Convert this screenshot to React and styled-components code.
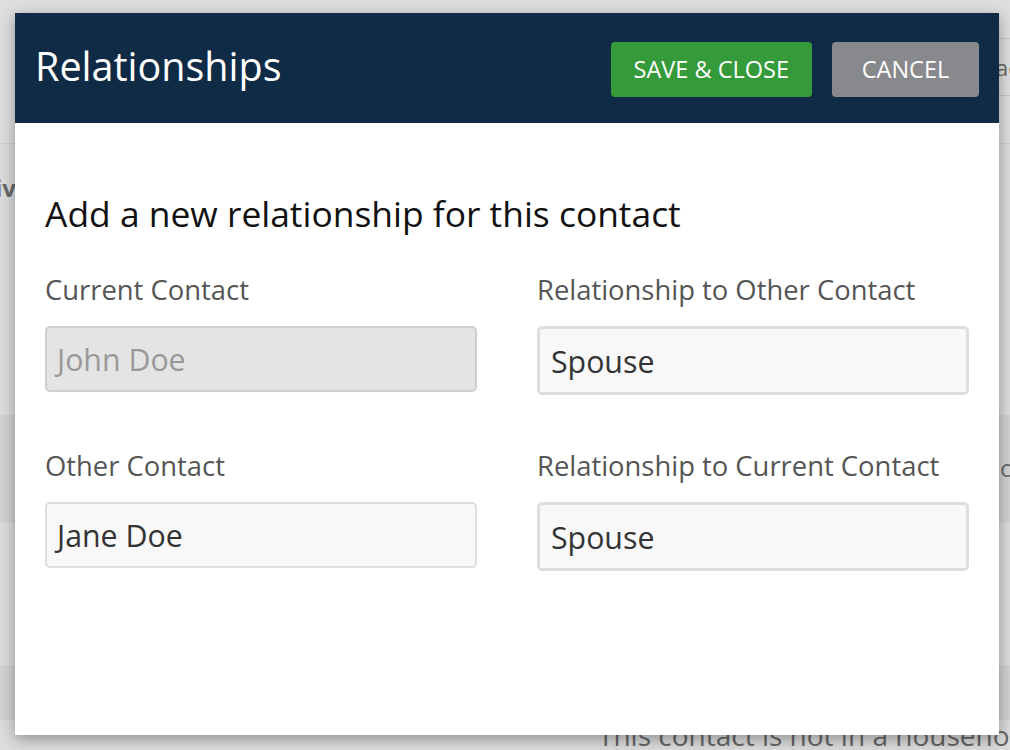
import React from "react";
import styled, { createGlobalStyle } from "styled-components";

//global styles
const GlobalStyle = createGlobalStyle`
    html, body {
        margin: 0;
        padding: 0;
        width: 1010px;
        height: 750px;
        overflow: hidden;
        font-family: "Open Sans", "Noto Sans", sans-serif;
    }
    * { box-sizing: border-box; }
`;

//background page (dimmed)
const Page = styled.div`
    position: relative;
    width: 1010px;
    height: 750px;
    background-color: #dcdcdc;
    display: flex;
    flex-direction: column;
    overflow: hidden;
    color: #6a6a6a;
`;

const PageTop = styled.div`
    height: 148px;
    background-color: #dedede;
    border-bottom: 1px solid #cfcfcf;
    display: flex;
    justify-content: flex-end;
    align-items: flex-start;
    padding-top: 38px;
`;

const SearchBox = styled.div`
    width: 14px;
    height: 58px;
    border-top: 1px solid #c8c8c8;
    border-bottom: 1px solid #c8c8c8;
    font-size: 22px;
    line-height: 56px;
    white-space: nowrap;
    overflow: hidden;
`;

const PageRow = styled.div`
    height: ${props => props.h}px;
    background-color: ${props => props.dark ? "#d2d2d2" : "transparent"};
    border-top: ${props => props.line ? "1px solid #cdcdcd" : "none"};
    display: flex;
    justify-content: space-between;
    align-items: center;
    font-size: 24px;
    font-weight: ${props => props.bold ? 700 : 400};
    white-space: nowrap;
`;

const Peek = styled.span`
    display: block;
    width: ${props => props.w}px;
    overflow: hidden;
    direction: ${props => props.rtl ? "rtl" : "ltr"};
`;

const BottomText = styled.div`
    padding-left: 598px;
    font-size: 28px;
    line-height: 30px;
    white-space: nowrap;
    color: #666;
`;

//modal
const Modal = styled.div`
    position: absolute;
    top: 13px;
    left: 15px;
    width: 984px;
    height: 722px;
    background-color: #ffffff;
    box-shadow: 0 4px 14px rgba(0, 0, 0, 0.35);
    display: flex;
    flex-direction: column;
`;

const ModalHeader = styled.div`
    height: 110px;
    background-color: #0f2b45;
    display: flex;
    align-items: center;
    justify-content: space-between;
    padding: 0 20px;
`;

const ModalTitle = styled.h1`
    margin: 0;
    color: #ffffff;
    font-size: 39.5px;
    font-weight: 400;
    line-height: 1;
    padding-bottom: 2px;
`;

const ButtonGroup = styled.div`
    display: flex;
    gap: 20px;
    margin-top: 2px;
`;

const Button = styled.button`
    height: 55px;
    min-width: 147px;
    padding: 0 23px;
    border: none;
    border-radius: 4px;
    background-color: ${props => props.variant === "save" ? "#359a3a" : "#88898c"};
    color: #ffffff;
    font-family: "Open Sans", sans-serif;
    font-size: 23.5px;
    text-transform: uppercase;
    letter-spacing: 0;
`;

const ModalBody = styled.div`
    padding: 69px 30px 0;
`;

const Heading = styled.h2`
    margin: 0 0 39px;
    font-size: 35.4px;
    font-weight: 400;
    line-height: 42px;
    color: #111111;
`;

const FormGrid = styled.div`
    display: grid;
    grid-template-columns: 432px 432px;
    column-gap: 60px;
    row-gap: 54px;
`;

const Field = styled.div`
    display: flex;
    flex-direction: column;
    gap: 19px;
`;

const Label = styled.label`
    font-size: 27.4px;
    line-height: 34px;
    color: #555555;
`;

const Input = styled.div`
    height: ${props => props.select ? 69 : 66}px;
    border: ${props => props.select ? "3px" : "2px"} solid ${props => props.disabled ? "#cfcfcf" : "#dedede"};
    border-radius: 5px;
    background-color: ${props => props.disabled ? "#e4e4e4" : "#f8f8f8"};
    color: ${props => props.disabled ? "#999999" : "#333333"};
    font-size: 30.3px;
    display: flex;
    align-items: center;
    padding: 0 ${props => props.select ? 11 : 10}px;
    padding-top: ${props => props.select ? 2 : 0}px;
`;

const fields = [
    { label: "Current Contact", value: "John Doe", disabled: true },
    { label: "Relationship to Other Contact", value: "Spouse", select: true },
    { label: "Other Contact", value: "Jane Doe" },
    { label: "Relationship to Current Contact", value: "Spouse", select: true },
];

//component
const App = () => {
    return (
        <>
            <GlobalStyle />
            <Page>
                <PageTop>
                    <SearchBox>ac</SearchBox>
                </PageTop>
                <PageRow h={90} bold>
                    <Peek w={16} rtl>iv</Peek>
                </PageRow>
                <PageRow h={190} />
                <PageRow h={110} dark>
                    <span />
                    <Peek w={10}>c</Peek>
                </PageRow>
                <PageRow h={150} line />
                <PageRow h={56} line dark>
                    <span />
                </PageRow>
                <BottomText>This contact is not in a household</BottomText>

                <Modal>
                    <ModalHeader>
                        <ModalTitle>Relationships</ModalTitle>
                        <ButtonGroup>
                            <Button variant="save">Save &amp; Close</Button>
                            <Button>Cancel</Button>
                        </ButtonGroup>
                    </ModalHeader>
                    <ModalBody>
                        <Heading>Add a new relationship for this contact</Heading>
                        <FormGrid>
                            {fields.map(f => (
                                <Field key={f.label}>
                                    <Label>{f.label}</Label>
                                    <Input disabled={f.disabled} select={f.select}>{f.value}</Input>
                                </Field>
                            ))}
                        </FormGrid>
                    </ModalBody>
                </Modal>
            </Page>
        </>
    );
};

export default App;
